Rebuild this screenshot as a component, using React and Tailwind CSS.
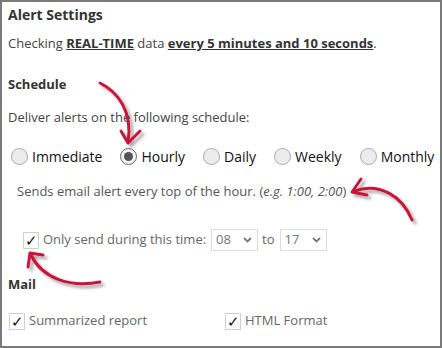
import React from "react";

function Radio({ checked }) {
  return (
    <span
      className={
        "inline-flex items-center justify-center w-[17px] h-[17px] rounded-full border shrink-0 " +
        (checked ? "border-[#666] bg-[#f2f2f2]" : "border-[#aaa] bg-[#ececec]")
      }
    >
      {checked && <span className="w-[9px] h-[9px] rounded-full bg-[#555]" />}
    </span>
  );
}

function Check() {
  return (
    <span className="inline-flex items-center justify-center w-[16px] h-[17px] border border-[#cfcfcf] bg-white shrink-0 text-[#111] text-[15px] leading-none font-light">
      ✓
    </span>
  );
}

function Select({ value }) {
  return (
    <span className="inline-flex items-center justify-between w-[47px] h-[22px] border border-[#dcdcdc] bg-white pl-[4px] pr-[5px] text-[#777] text-[13px]">
      <span>{value}</span>
      <svg width="9" height="6" viewBox="0 0 9 6">
        <path d="M1 1 L4.5 4.5 L8 1" fill="none" stroke="#777" strokeWidth="1.8" />
      </svg>
    </span>
  );
}

const radios = [
  ["Immediate", false],
  ["Hourly", true],
  ["Daily", false],
  ["Weekly", false],
  ["Monthly", false],
];

export default function App() {
  return (
    <div
      className="relative w-[442px] h-[348px] bg-white border-2 border-[#7a7a7a] text-[#444] overflow-hidden"
      style={{ fontFamily: '"Open Sans", sans-serif' }}
    >
      <div className="flex flex-col pl-[6px]">
        <div className="h-[24px] flex items-center text-[14px] font-bold text-[#333]">
          Alert Settings
        </div>
        <div className="mt-[6px] h-[24px] flex items-center text-[13px] whitespace-pre">
          <span>Checking </span>
          <span className="font-bold underline text-[#333]">REAL-TIME</span>
          <span> data </span>
          <span className="font-bold underline text-[#333]">every 5 minutes and 10 seconds</span>
          <span>.</span>
        </div>
        <div className="mt-[17px] h-[24px] flex items-center text-[13px] font-bold text-[#333]">
          Schedule
        </div>
        <div className="mt-[9px] h-[24px] flex items-center text-[13px]">
          Deliver alerts on the following schedule:
        </div>
        <div className="mt-[14px] h-[24px] flex items-center gap-[18px] pl-[3px] text-[14px] text-[#111]">
          {radios.map(([label, checked]) => (
            <div key={label} className="flex items-center gap-[4px]">
              <Radio checked={checked} />
              <span>{label}</span>
            </div>
          ))}
        </div>
        <div className="mt-[12px] h-[24px] flex items-center pl-[9px] text-[13px] text-[#555]">
          Sends email alert every top of the hour.&nbsp;<span>(<i>e.g. 1:00, 2:00</i>)</span>
        </div>
        <div className="mt-[24px] h-[24px] flex items-center pl-[15px] text-[13px] text-[#666]">
          <Check />
          <span className="ml-[4px]">Only send during this time:</span>
          <span className="ml-[5px]"><Select value="08" /></span>
          <span className="ml-[4px]">to</span>
          <span className="ml-[5px]"><Select value="17" /></span>
        </div>
        <div className="mt-[21px] h-[24px] flex items-center text-[13px] font-bold text-[#333]">
          Mail
        </div>
        <div className="mt-[12px] h-[24px] flex items-center pl-[1px] text-[13px] text-[#666]">
          <div className="flex items-center w-[216px]">
            <Check />
            <span className="ml-[4px]">Summarized report</span>
          </div>
          <div className="flex items-center">
            <Check />
            <span className="ml-[4px]">HTML Format</span>
          </div>
        </div>
      </div>

      <svg
        className="absolute left-[-2px] top-[-2px] pointer-events-none"
        width="442"
        height="348"
        viewBox="0 0 442 348"
      >
        <defs>
          <filter id="sh" x="-20%" y="-20%" width="140%" height="140%">
            <feDropShadow dx="3" dy="3" stdDeviation="1.6" floodColor="#000" floodOpacity="0.35" />
          </filter>
        </defs>
        <g fill="none" stroke="#c8173a" strokeLinecap="round" strokeLinejoin="round" filter="url(#sh)">
          <path d="M100 83 C 118 92, 133 112, 128 142" strokeWidth="3" />
          <path d="M121 131 L128 143 L140 131" strokeWidth="3" />
          <path d="M412 220 C 402 196, 380 182, 354 191" strokeWidth="3" />
          <path d="M361 179 L352 192 L367 195" strokeWidth="3" />
          <path d="M100 282 C 70 288, 42 278, 31 255" strokeWidth="3" />
          <path d="M43 255 L30 253 L28 267" strokeWidth="3" />
        </g>
      </svg>
    </div>
  );
}
